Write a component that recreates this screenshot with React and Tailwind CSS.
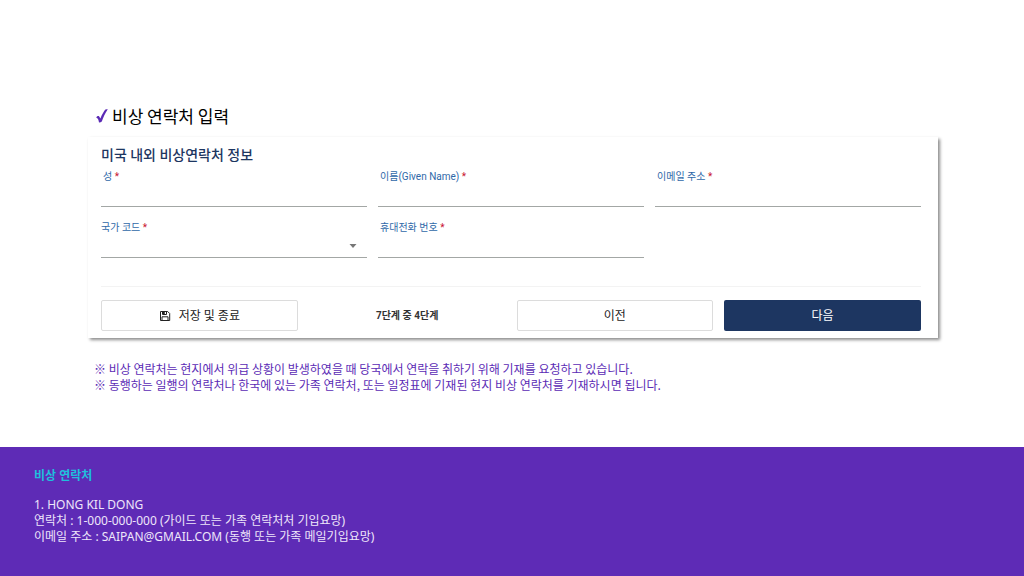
import React, { useState } from "react";

const Required = () => <span className="text-[#c8102e]">*</span>;

const TextField = ({ id, label, type = "text" }) => (
  <div className="flex flex-col">
    <label htmlFor={id} className="pl-0.5 text-[10px] leading-4 text-[#2f68a8]">
      {label} <Required />
    </label>
    <input
      id={id}
      type={type}
      required
      className="h-[22px] w-full border-b border-[#a3a7a5] bg-transparent text-xs outline-none focus:border-[#1d3661]"
    />
  </div>
);

const CountrySelect = () => {
  const [code, setCode] = useState("");

  return (
    <div className="flex flex-col">
      <label htmlFor="country" className="text-[10px] leading-4 text-[#2f68a8]">
        국가 코드 <Required />
      </label>
      <div className="relative">
        <select
          id="country"
          value={code}
          onChange={(e) => setCode(e.target.value)}
          className="block h-[22px] w-full appearance-none border-b border-[#a3a7a5] bg-transparent text-xs outline-none"
        >
          <option value=""></option>
          <option value="82">+82</option>
          <option value="1">+1</option>
        </select>
        <svg viewBox="0 0 8 4" className="pointer-events-none absolute top-2 right-2.5 h-1 w-2 fill-[#777]">
          <path d="M0.5 0h7L4 4z" />
        </svg>
      </div>
    </div>
  );
};

const SaveIcon = () => (
  <svg viewBox="0 0 12 12" className="size-3" fill="none" stroke="#222" strokeWidth="1" strokeLinejoin="round">
    <path d="M1.5 1.5h7.2l2 2v7H1.5z" />
    <path d="M3.5 1.5v3h4v-3M3 10.5V6.8h6v3.7" />
    <path d="M4 1.5h1.8v2.6H4z" fill="#222" stroke="none" />
  </svg>
);

const outlineButton =
  "flex h-[31px] items-center justify-center gap-2 rounded-xs border border-[#dcdcdc] bg-white text-xs text-[#222]";

const App = () => {
  return (
    <div className="flex min-h-screen flex-col bg-white font-['Noto_Sans_CJK_KR',sans-serif]">
      <main className="flex-1 pt-[104px] pr-[86px] pb-8 pl-[88px]">
        <h1 className="flex items-center gap-1 pl-2 text-[17px] leading-6 text-black">
          <svg viewBox="0 0 12 14" className="h-3.5 w-3 fill-[#5b2bb5]">
            <path d="M0.2 8.6C0.6 7.2 2.4 6.4 3.2 7.4L4.4 9.4C6 5.6 7.8 2.4 9.4 0.6Q10 0 11.8 0.3C9.2 4 7.2 8.4 5.8 12.6Q4.6 13.6 3 13.5C2.6 11.2 2 9.2 0.2 8.6z" />
          </svg>
          비상 연락처 입력
        </h1>

        <form
          onSubmit={(e) => e.preventDefault()}
          className="mt-[9px] pt-2 pr-[17px] pb-[7px] pl-[13px] font-[Roboto,'Noto_Sans_CJK_KR',sans-serif] shadow-[2px_2px_3px_rgba(0,0,0,0.45)]"
        >
          <h2 className="text-sm leading-5 font-medium text-[#1d3661]">미국 내외 비상연락처 정보</h2>
          <div className="mt-1 grid grid-cols-3 gap-x-[11px] gap-y-[13px]">
            <TextField id="surname" label="성" />
            <TextField id="given" label="이름(Given Name)" />
            <TextField id="email" label="이메일 주소" type="email" />
            <CountrySelect />
            <TextField id="phone" label="휴대전화 번호" type="tel" />
          </div>
          <div className="mt-7 grid grid-cols-4 items-center gap-[11px] border-t border-[#f3f3f3] pt-[13px]">
            <button type="button" className={outlineButton}>
              <SaveIcon />
              저장 및 종료
            </button>
            <p className="text-center text-[10px] leading-4 font-bold text-[#333]">7단계 중 4단계</p>
            <button type="button" className={outlineButton}>
              이전
            </button>
            <button type="submit" className="h-[31px] rounded-xs bg-[#1d3661] text-xs text-white">
              다음
            </button>
          </div>
        </form>

        <div className="mt-[23px] pl-1.5 text-xs leading-4 text-[#5b2bb5]">
          <p>※ 비상 연락처는 현지에서 위급 상황이 발생하였을 때 당국에서 연락을 취하기 위해 기재를 요청하고 있습니다.</p>
          <p>※ 동행하는 일행의 연락처나 한국에 있는 가족 연락처, 또는 일정표에 기재된 현지 비상 연락처를 기재하시면 됩니다.</p>
        </div>
      </main>

      <footer className="bg-[#5e2bb6] px-[34px] pt-[21px] pb-[31px] font-['Noto_Sans','Noto_Sans_CJK_KR',sans-serif] text-xs leading-4 text-[#eee6fa]">
        <h2 className="font-bold text-[#1fbfdc]">비상 연락처</h2>
        <div className="mt-[13px]">
          <p>1. HONG KIL DONG</p>
          <p>연락처 : 1-000-000-000 (가이드 또는 가족 연락처처 기입요망)</p>
          <p>이메일 주소 : SAIPAN@GMAIL.COM (동행 또는 가족 메일기입요망)</p>
        </div>
      </footer>
    </div>
  );
};

export default App;
